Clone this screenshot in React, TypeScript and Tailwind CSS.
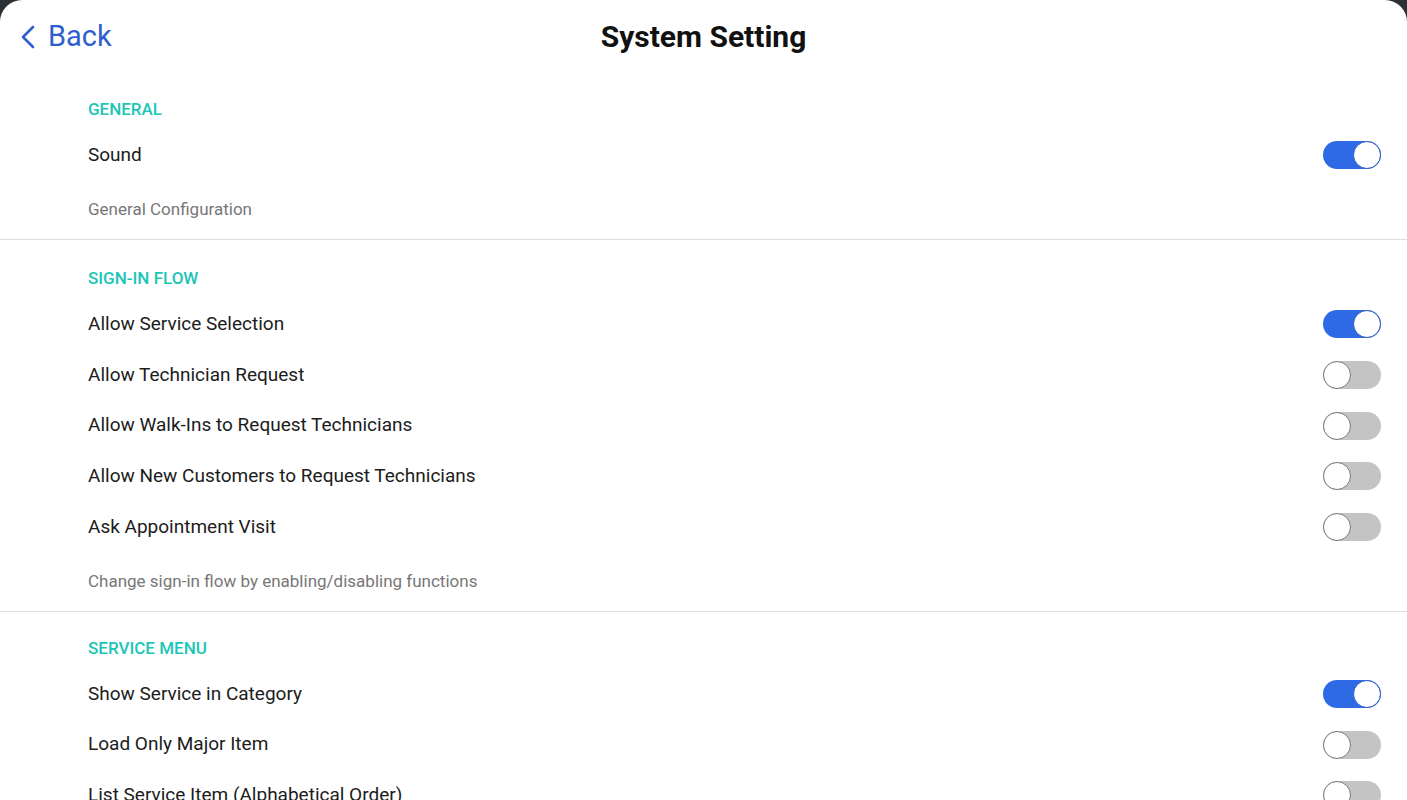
const sections = [
  {
    title: 'GENERAL',
    note: 'General Configuration',
    rows: [{ label: 'Sound', on: true }],
  },
  {
    title: 'SIGN-IN FLOW',
    note: 'Change sign-in flow by enabling/disabling functions',
    rows: [
      { label: 'Allow Service Selection', on: true },
      { label: 'Allow Technician Request', on: false },
      { label: 'Allow Walk-Ins to Request Technicians', on: false },
      { label: 'Allow New Customers to Request Technicians', on: false },
      { label: 'Ask Appointment Visit', on: false },
    ],
  },
  {
    title: 'SERVICE MENU',
    note: '',
    rows: [
      { label: 'Show Service in Category', on: true },
      { label: 'Load Only Major Item', on: false },
      { label: 'List Service Item (Alphabetical Order)', on: false },
      { label: 'Show Price', on: false },
    ],
  },
];

function Toggle({ on }: { on: boolean }) {
  return (
    <div
      className={
        on
          ? 'w-[58px] h-[28px] rounded-full bg-[#2f6ae6] flex justify-end'
          : 'w-[58px] h-[28px] rounded-full bg-[#c4c4c4] flex justify-start'
      }
    >
      <div
        className={
          on
            ? 'w-[28px] h-[28px] rounded-full bg-white border border-[#2f5bc4]'
            : 'w-[28px] h-[28px] rounded-full bg-white border-[1.5px] border-[#7a7a7a]'
        }
      />
    </div>
  );
}

export default function App() {
  return (
    <div className="w-[1407px] h-[800px] bg-[#2a3033] overflow-hidden font-['Roboto',sans-serif]">
      <div className="h-full bg-white rounded-t-[22px] overflow-hidden">
        <div className="h-[71px] relative flex items-center justify-center">
          <div className="absolute left-[20px] top-0 h-full flex items-center gap-[12px] text-[#2f5fcf] pt-[2px]">
            <svg width="16" height="24" viewBox="0 0 16 24" fill="none">
              <polyline
                points="13,2 3,12 13,22"
                stroke="currentColor"
                strokeWidth="2.6"
                strokeLinecap="round"
                strokeLinejoin="round"
              />
            </svg>
            <span className="text-[29px] leading-none">Back</span>
          </div>
          <h1 className="text-[30px] font-bold text-[#111] leading-none mt-[2px]">System Setting</h1>
        </div>

        {sections.map((s, i) => (
          <div key={s.title} className={i < sections.length - 1 ? 'border-b border-[#dedede]' : ''}>
            <div className={i === 2 ? 'pt-[27px] pb-[19px] pl-[88px] pr-[26px]' : 'pt-[29px] pb-[19px] pl-[88px] pr-[26px]'}>
              <div className="h-5 flex items-center text-[17px] font-medium text-[#1bc6b6]">{s.title}</div>
              <div className="mt-[10px]">
                {s.rows.map((r) => (
                  <div key={r.label} className="h-[50.75px] flex items-center justify-between">
                    <span className="text-[19px] text-[#1c1c1c]">{r.label}</span>
                    <Toggle on={r.on} />
                  </div>
                ))}
              </div>
              {s.note && (
                <div className="mt-[19px] h-5 flex items-center text-[17px] text-[#777]">{s.note}</div>
              )}
            </div>
          </div>
        ))}
      </div>
    </div>
  );
}
